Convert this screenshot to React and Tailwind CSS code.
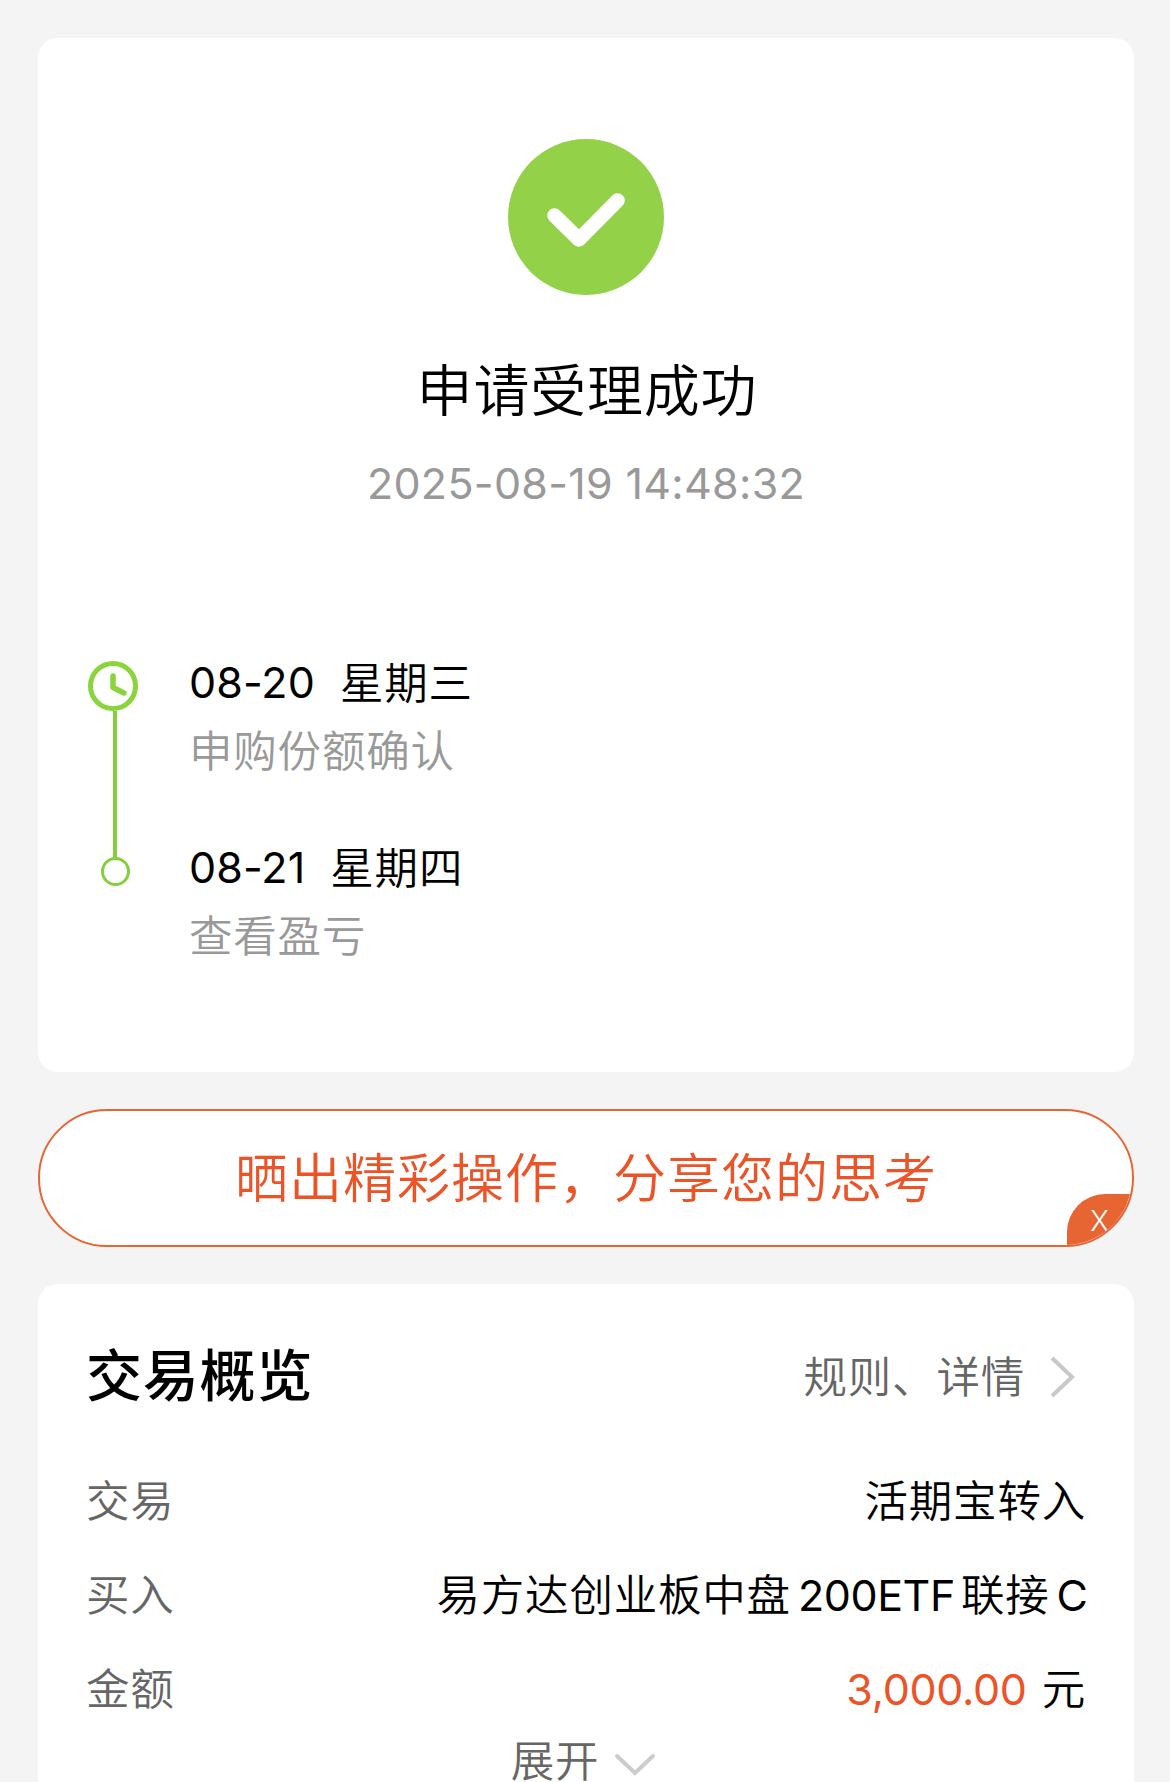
import React from "react";

const zh = "text-[43.5px] tracking-[0.8px] font-[350]";

function Step({ date, day, note }) {
  return (
    <div className="h-[185px]">
      <div className="flex h-[60px] items-center text-black">
        <span className="pb-[2px] text-[43px] tracking-[0.1px]">{date}</span>
        <span className={"ml-[25px] pt-[1px] " + zh}>{day}</span>
      </div>
      <div className={"flex h-[76px] items-center pt-[2px] text-[#999999] " + zh}>{note}</div>
    </div>
  );
}

function Row({ label, children }) {
  return (
    <div className="flex h-[94px] items-center justify-between">
      <span className={"pt-[2px] text-[#666666] " + zh}>{label}</span>
      <div className="flex items-center text-black">{children}</div>
    </div>
  );
}

export default function App() {
  return (
    <div className="h-[1782px] w-[1170px] overflow-hidden bg-[#f4f4f4] pt-[38px] pr-[36px] pl-[38px] font-['Inter','Noto_Sans_CJK_SC',sans-serif] leading-none whitespace-nowrap">
      <section className="h-[1034px] rounded-[20px] bg-white pt-[101px]">
        <svg className="mx-auto block h-[156px] w-[156px]" viewBox="0 0 156 156" fill="none">
          <circle cx="78" cy="78" r="78" fill="#93d248" />
          <path d="M46.5 76.5 71 100.5 109.5 61.5" stroke="#fff" strokeWidth="14.5" strokeLinecap="round" strokeLinejoin="round" />
        </svg>
        <h1 className="mt-[61px] flex h-[70px] items-center justify-center pl-[2px] text-[56px] font-[350] tracking-[0.8px] text-black">申请受理成功</h1>
        <p className="mt-[27px] flex h-[60px] items-center justify-center text-[43px] tracking-[0.3px] text-[#999999]">2025-08-19 14:48:32</p>

        <div className="mt-[140px] flex">
          <div className="ml-[50px] flex w-[50px] flex-col items-center pt-[8px]">
            <svg className="block h-[50px] w-[50px]" viewBox="0 0 50 50" fill="none" stroke="#8ad43c">
              <circle cx="25" cy="25" r="22.5" strokeWidth="5" />
              <path d="M25 15V26.5L36 32" strokeWidth="5.5" strokeLinecap="round" strokeLinejoin="round" />
            </svg>
            <div className="ml-[4px] h-[146px] w-[4px] bg-[#84d03c]" />
            <div className="ml-[5px] h-[29px] w-[29px] rounded-full border-[3px] border-[#84d03c]" />
          </div>
          <div className="ml-[51px]">
            <Step date="08-20" day="星期三" note="申购份额确认" />
            <Step date="08-21" day="星期四" note="查看盈亏" />
          </div>
        </div>
      </section>

      <div className="relative mt-[37px] flex h-[138px] items-center justify-center overflow-hidden rounded-full border-2 border-[#e76532] bg-white">
        <span className="pt-[3px] text-[53px] font-[350] tracking-[1px] text-[#ec5428]">晒出精彩操作，分享您的思考</span>
        <button className="absolute right-[-2px] bottom-[-2px] flex h-[53px] w-[67px] items-center justify-center rounded-tl-[38px] bg-[#e76532] pr-[2px] text-[28px] font-light text-white">X</button>
      </div>

      <section className="mt-[37px] h-[498px] rounded-t-[20px] bg-white pt-[51px] pr-[48px] pl-[48px]">
        <div className="flex h-[84px] items-center justify-between">
          <h2 className="pb-[2px] text-[56px] font-medium tracking-[0.8px] text-black">交易概览</h2>
          <div className="flex items-center">
            <span className={"pt-[2px] text-[#666666] " + zh}>规则、详情</span>
            <svg className="mr-[9px] ml-[24px] block h-[42px] w-[28px]" viewBox="0 0 28 42" fill="none" stroke="#c8c8c8" strokeWidth="4">
              <path d="M3 2 23 21 3 40" />
            </svg>
          </div>
        </div>
        <div className="mt-[35px]">
          <Row label="交易"><span className={"pt-[2px] " + zh}>活期宝转入</span></Row>
          <Row label="买入">
            <span className={"pt-[2px] " + zh}>易方达创业板中盘</span>
            <span className="ml-[7px] text-[43px] tracking-[-0.4px]">200ETF</span>
            <span className={"ml-[6px] pt-[2px] " + zh}>联接</span>
            <span className="mr-[-2px] ml-[7px] text-[43px]">C</span>
          </Row>
          <Row label="金额">
            <span className="text-[43px] tracking-[-0.3px] text-[#ec5428]">3,000.00</span>
            <span className={"ml-[15px] pt-[2px] " + zh}>元</span>
          </Row>
        </div>
        <div className="flex h-[46px] items-center justify-center pr-[5px]">
          <span className={"pt-[5px] text-[#666666] " + zh}>展开</span>
          <svg className="mt-[11px] ml-[15px] block h-[26px] w-[42px]" viewBox="0 0 42 26" fill="none" stroke="#cccccc" strokeWidth="4" strokeLinecap="round">
            <path d="M3 4 21 21 39 4" />
          </svg>
        </div>
      </section>
    </div>
  );
}
